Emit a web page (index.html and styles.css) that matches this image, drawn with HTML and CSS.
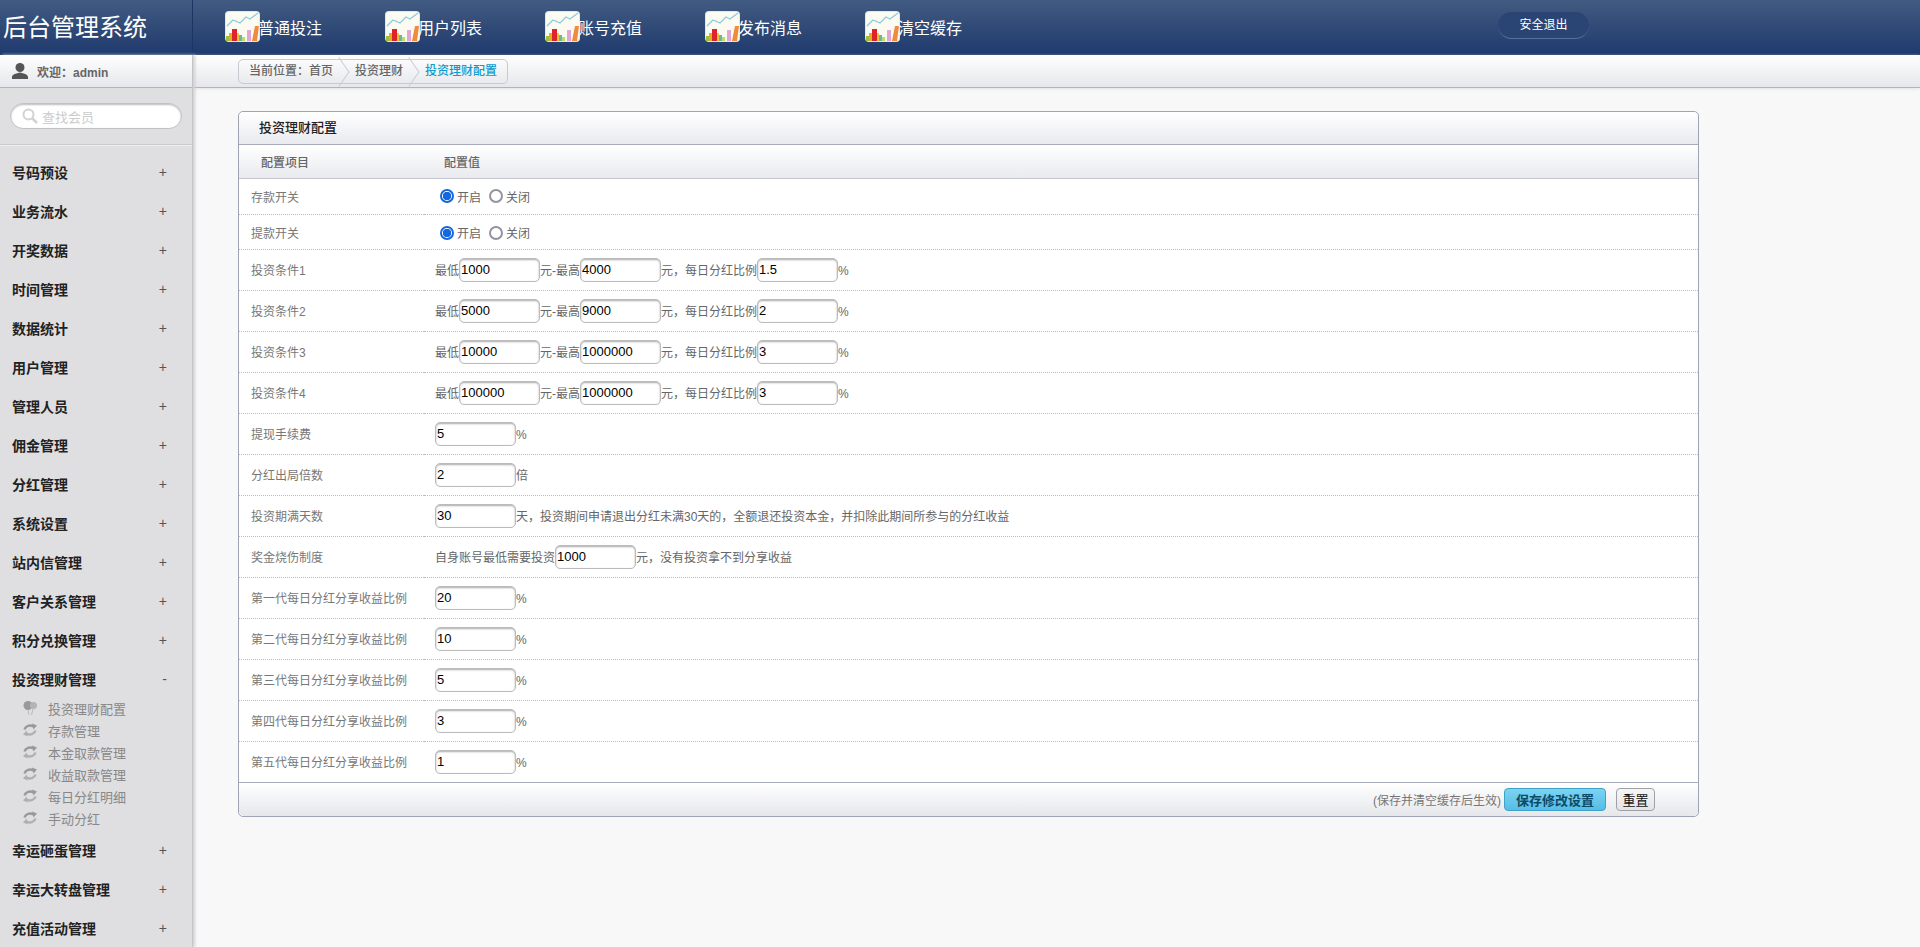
FILE: index.html
```html
<!DOCTYPE html>
<html lang="en">
<head>
    <meta charset="UTF-8">
    <meta name="viewport" content="width=device-width, initial-scale=1.0">
    <title>后台管理系统</title>
    <link rel="stylesheet" href="styles.css">
</head>
<body>
    <svg class="defs" width="0" height="0">
        <symbol id="chart" viewBox="0 0 35 31">
            <rect x="0" y="0" width="35" height="31" rx="4" fill="#e8e8e0"/>
            <rect x="1" y="1" width="33" height="29" rx="3" fill="#fbfbf2"/>
            <path d="M2 15L8 9L15 12L21 6L25 8L33 2" fill="none" stroke="#8ccbdc" stroke-width="1.200"/>
            <rect x="1" y="25" width="3" height="5" fill="#9cc23c"/>
            <rect x="4" y="22" width="3" height="8" fill="#f0a81e"/>
            <rect x="7" y="18" width="5" height="12" fill="#d8262c"/>
            <rect x="12" y="22" width="2" height="8" fill="#e8c53a"/>
            <rect x="14" y="24" width="3" height="6" fill="#63b7b0"/>
            <rect x="17" y="26" width="3" height="4" fill="#c8d860"/>
            <rect x="22" y="19" width="4" height="11" fill="#dfa6d6"/>
            <path d="M27 30L30 15H34L32 30Z" fill="#f28a3c"/>
        </symbol>
        <symbol id="refresh" viewBox="0 0 14 14">
            <path d="M1.500 6.500C2.500 3 7 1.500 10.500 3.500" fill="none" stroke="#999" stroke-width="2.500"/>
            <path d="M9 0.500L14 2.500L10.500 6.500Z" fill="#999"/>
            <path d="M12.500 7.500C11.500 11 7 12.500 3.500 10.500" fill="none" stroke="#b0b0b0" stroke-width="2.500"/>
            <path d="M5 13.500L0 11.500L3.500 7.500Z" fill="#b0b0b0"/>
        </symbol>
    </svg>

    <header class="topbar">
        <div class="logo">后台管理系统</div>
        <nav class="topnav">
            <a class="topnav-item"><svg class="chart-icon"><use href="#chart"/></svg>普通投注</a>
            <a class="topnav-item"><svg class="chart-icon"><use href="#chart"/></svg>用户列表</a>
            <a class="topnav-item"><svg class="chart-icon"><use href="#chart"/></svg>账号充值</a>
            <a class="topnav-item"><svg class="chart-icon"><use href="#chart"/></svg>发布消息</a>
            <a class="topnav-item"><svg class="chart-icon"><use href="#chart"/></svg>清空缓存</a>
        </nav>
        <a class="logout">安全退出</a>
    </header>

    <div class="layout">
        <aside class="sidebar">
            <div class="welcome">
                <svg class="user-icon" viewBox="0 0 16 16"><circle cx="8" cy="4.500" r="4.500" fill="#555"/><path d="M0 16V14C0 11 5 10.500 8 9.500C11 10.500 16 11 16 14V16Z" fill="#555"/></svg>
                <span>欢迎：admin</span>
            </div>
            <div class="search-wrap">
                <div class="search">
                    <svg class="search-icon" viewBox="0 0 16 16"><circle cx="6.500" cy="6.500" r="5" fill="none" stroke="#d2d2d2" stroke-width="2"/><path d="M10 10L15 15" stroke="#d2d2d2" stroke-width="2.500"/></svg>
                    <span>查找会员</span>
                </div>
            </div>
            <ul class="menu">
                <li class="menu-item"><span>号码预设</span><i>+</i></li>
                <li class="menu-item"><span>业务流水</span><i>+</i></li>
                <li class="menu-item"><span>开奖数据</span><i>+</i></li>
                <li class="menu-item"><span>时间管理</span><i>+</i></li>
                <li class="menu-item"><span>数据统计</span><i>+</i></li>
                <li class="menu-item"><span>用户管理</span><i>+</i></li>
                <li class="menu-item"><span>管理人员</span><i>+</i></li>
                <li class="menu-item"><span>佣金管理</span><i>+</i></li>
                <li class="menu-item"><span>分红管理</span><i>+</i></li>
                <li class="menu-item"><span>系统设置</span><i>+</i></li>
                <li class="menu-item"><span>站内信管理</span><i>+</i></li>
                <li class="menu-item"><span>客户关系管理</span><i>+</i></li>
                <li class="menu-item"><span>积分兑换管理</span><i>+</i></li>
                <li class="menu-item"><span>投资理财管理</span><i>-</i></li>
                <li class="submenu">
                    <a><svg class="sub-icon" viewBox="0 0 14 14"><circle cx="5" cy="4.500" r="4.500" fill="#999"/><circle cx="10.500" cy="4.500" r="3.500" fill="#b4b4b4"/><path d="M5 9L6 14M10 8L8.500 14" stroke="#bbb" stroke-width="1"/></svg>投资理财配置</a>
                    <a><svg class="sub-icon"><use href="#refresh"/></svg>存款管理</a>
                    <a><svg class="sub-icon"><use href="#refresh"/></svg>本金取款管理</a>
                    <a><svg class="sub-icon"><use href="#refresh"/></svg>收益取款管理</a>
                    <a><svg class="sub-icon"><use href="#refresh"/></svg>每日分红明细</a>
                    <a><svg class="sub-icon"><use href="#refresh"/></svg>手动分红</a>
                </li>
                <li class="menu-item"><span>幸运砸蛋管理</span><i>+</i></li>
                <li class="menu-item"><span>幸运大转盘管理</span><i>+</i></li>
                <li class="menu-item"><span>充值活动管理</span><i>+</i></li>
            </ul>
        </aside>

        <main class="content">
            <div class="crumbbar">
                <div class="crumbs">
                    <span class="crumb">当前位置：首页</span>
                    <span class="crumb">投资理财</span>
                    <span class="crumb current">投资理财配置</span>
                </div>
            </div>

            <form class="panel">
                <div class="panel-title">投资理财配置</div>
                <table class="config">
                    <thead>
                        <tr><th class="col-name">配置项目</th><th>配置值</th></tr>
                    </thead>
                    <tbody>
                        <tr class="switch first">
                            <td>存款开关</td>
                            <td><input class="radio" type="radio" name="dep" checked><span class="opt">开启</span><input class="radio" type="radio" name="dep"><span class="opt">关闭</span></td>
                        </tr>
                        <tr class="switch">
                            <td>提款开关</td>
                            <td><input class="radio" type="radio" name="wd" checked><span class="opt">开启</span><input class="radio" type="radio" name="wd"><span class="opt">关闭</span></td>
                        </tr>
                        <tr><td>投资条件1</td><td>最低<input class="num" value="1000">元-最高<input class="num" value="4000">元，每日分红比例<input class="num" value="1.5">%</td></tr>
                        <tr><td>投资条件2</td><td>最低<input class="num" value="5000">元-最高<input class="num" value="9000">元，每日分红比例<input class="num" value="2">%</td></tr>
                        <tr><td>投资条件3</td><td>最低<input class="num" value="10000">元-最高<input class="num" value="1000000">元，每日分红比例<input class="num" value="3">%</td></tr>
                        <tr><td>投资条件4</td><td>最低<input class="num" value="100000">元-最高<input class="num" value="1000000">元，每日分红比例<input class="num" value="3">%</td></tr>
                        <tr><td>提现手续费</td><td><input class="num" value="5">%</td></tr>
                        <tr><td>分红出局倍数</td><td><input class="num" value="2">倍</td></tr>
                        <tr><td>投资期满天数</td><td><input class="num" value="30">天，投资期间申请退出分红未满30天的，全额退还投资本金，并扣除此期间所参与的分红收益</td></tr>
                        <tr><td>奖金烧伤制度</td><td>自身账号最低需要投资<input class="num" value="1000">元，没有投资拿不到分享收益</td></tr>
                        <tr><td>第一代每日分红分享收益比例</td><td><input class="num" value="20">%</td></tr>
                        <tr><td>第二代每日分红分享收益比例</td><td><input class="num" value="10">%</td></tr>
                        <tr><td>第三代每日分红分享收益比例</td><td><input class="num" value="5">%</td></tr>
                        <tr><td>第四代每日分红分享收益比例</td><td><input class="num" value="3">%</td></tr>
                        <tr><td>第五代每日分红分享收益比例</td><td><input class="num" value="1">%</td></tr>
                    </tbody>
                </table>
                <div class="panel-foot">
                    <span class="note">(保存并清空缓存后生效)</span>
                    <button class="btn-save" type="button">保存修改设置</button>
                    <button class="btn-reset" type="button">重置</button>
                </div>
            </form>
        </main>
    </div>
</body>
</html>
```

FILE: styles.css
```css
* {
    box-sizing: border-box;
}
html, body {
    height: 100%;
}
body {
    margin: 0;
    overflow: hidden;
    display: flex;
    flex-direction: column;
    font-family: "Liberation Sans", "Noto Sans CJK SC", sans-serif;
    font-size: 12px;
    color: #666;
    background-color: #f8f8f9;
}
.defs {
    position: absolute;
}

/* top bar */
.topbar {
    flex: none;
    height: 55px;
    display: flex;
    background: linear-gradient(#425b82, #1f3a6d);
    border-bottom: 1px solid #1c3563;
    color: #fff;
}
.logo {
    width: 193px;
    padding: 13px 0 0 3px;
    font-size: 24px;
    line-height: 30px;
    white-space: nowrap;
    border-right: 1px solid #1c3563;
}
.topnav {
    display: flex;
    padding: 11px 0 0 32px;
    width: 1305px;
}
.topnav-item {
    width: 160px;
    display: flex;
    font-size: 16px;
    line-height: 35px;
}
.chart-icon {
    width: 35px;
    height: 31px;
    margin-right: -2px;
}
.logout {
    width: 91px;
    height: 27px;
    margin-top: 12px;
    border-radius: 14px;
    background-color: #2a4573;
    border-bottom: 1px solid #55709a;
    text-align: center;
    line-height: 26px;
}

/* sidebar */
.layout {
    flex: 1;
    display: flex;
    min-height: 0;
}
.sidebar {
    flex: none;
    width: 193px;
    background-color: #dfdfe1;
    border-right: 1px solid #c4c4c6;
    box-shadow: 2px 0 3px #d0d0d2;
    position: relative;
}
.welcome {
    height: 33px;
    display: flex;
    align-items: center;
    padding-left: 12px;
    font-weight: bold;
    color: #666;
    background: linear-gradient(#fff, #e6e7eb);
    border-bottom: 1px solid #b0b3c2;
}
.user-icon {
    width: 16px;
    height: 16px;
    margin-right: 9px;
}
.search-wrap {
    height: 58px;
    padding: 15px 10px 0;
    border-bottom: 1px solid #efeff0;
    box-shadow: 0 -1px 0 #c9c9cb inset;
}
.search {
    height: 26px;
    display: flex;
    align-items: center;
    padding-left: 11px;
    border: 1px solid #c2c2c4;
    border-radius: 13px;
    background-color: #fff;
    box-shadow: 0 1px 2px #bbb inset;
    color: #ccc;
    font-size: 13px;
}
.search-icon {
    width: 16px;
    height: 16px;
    margin-right: 4px;
}
.menu {
    list-style: none;
    margin: 0;
    padding: 6px 0 0;
}
.menu-item {
    height: 39px;
    display: flex;
    align-items: center;
    justify-content: space-between;
    padding: 0 25px 0 12px;
    font-size: 14px;
    font-weight: bold;
    color: #222;
}
.menu-item i {
    font-style: normal;
    font-weight: normal;
    color: #555;
}
.submenu {
    margin-top: -1px;
    padding: 0 0 1px 23px;
}
.submenu a {
    height: 22px;
    display: flex;
    align-items: center;
    font-size: 13px;
    color: #888;
}
.sub-icon {
    width: 14px;
    height: 14px;
    margin-right: 11px;
}

/* main content */
.content {
    flex: 1;
    min-width: 0;
}
.crumbbar {
    height: 33px;
    padding: 4px 0 0 45px;
    background: linear-gradient(#fff, #e6e7eb);
    border-bottom: 1px solid #b0b3c2;
    box-shadow: 0 1px 3px #e4e4e8;
}
.crumbs {
    display: inline-flex;
    height: 25px;
    border: 1px solid #c8cad2;
    border-radius: 5px;
    line-height: 23px;
    padding-left: 10px;
    padding-right: 10px;
}
.crumb {
    position: relative;
    margin-right: 22px;
    font-weight: 500;
}
.crumb::after {
    content: "";
    position: absolute;
    top: 3px;
    right: -15px;
    width: 17px;
    height: 17px;
    border-top: 1px solid #c8cad2;
    border-right: 1px solid #c8cad2;
    transform: rotate(45deg) skew(10deg, 10deg);
}
.crumb.current {
    margin-right: 0;
    color: #0d9ccf;
}
.crumb.current::after {
    display: none;
}

.panel {
    width: 1461px;
    margin: 23px 0 0 45px;
    border: 1px solid #a0a3b3;
    border-radius: 5px;
    background-color: #fff;
}
.panel-title {
    height: 33px;
    padding-left: 20px;
    line-height: 32px;
    font-size: 13px;
    font-weight: 500;
    color: #222;
    background: linear-gradient(#fff, #e9eaee);
    border-bottom: 1px solid #a8abba;
    border-radius: 5px 5px 0 0;
}
.config {
    width: 100%;
    border-collapse: collapse;
    table-layout: fixed;
}
.config th {
    height: 33px;
    padding: 0 0 0 20px;
    text-align: left;
    font-weight: 500;
    color: #666;
    background: linear-gradient(#fff, #e9eaee);
    border-bottom: 1px solid #c4c6d0;
}
.config th.col-name {
    width: 185px;
    padding-left: 22px;
}
.config td {
    height: 41px;
    padding: 0 0 0 11px;
    color: #666;
    border-bottom: 1px dotted #bbb;
    white-space: nowrap;
}
.config td:first-child {
    padding-left: 12px;
    color: #777;
}
.config tr.switch td {
    height: 35px;
    padding-top: 2px;
}
.config tr.first td {
    height: 36px;
    padding-top: 0;
}
.radio {
    appearance: none;
    width: 14px;
    height: 14px;
    margin: 0 3px 0 5px;
    border: 2px solid #9393a3;
    border-radius: 50%;
    background-color: #fff;
    vertical-align: middle;
}
.radio:checked {
    border-color: #1467dc;
    background: radial-gradient(circle, #1467dc 4px, #fff 4.500px);
}
.opt {
    margin-right: 3px;
    vertical-align: middle;
}
.num {
    width: 81px;
    height: 24px;
    padding: 0 1px;
    border: 1px solid #bbb;
    border-radius: 5px;
    box-shadow: 0 1px 2px #aaa inset;
    font-family: "Liberation Sans", sans-serif;
    font-size: 13px;
    color: #000;
}
.panel-foot {
    height: 34px;
    display: flex;
    align-items: center;
    justify-content: flex-end;
    padding: 1px 43px 0 0;
    background: linear-gradient(#fff, #e6e7eb);
    border-top: 1px solid #a8abba;
    margin-top: -1px;
    position: relative;
    border-radius: 0 0 5px 5px;
}
.note {
    color: #777;
}
.btn-save {
    width: 102px;
    height: 23px;
    margin-left: 3px;
    padding: 0;
    border: 1px solid #3fa0c8;
    border-radius: 4px;
    background: linear-gradient(#7bd4f2, #55bde6);
    font-family: inherit;
    font-size: 13px;
    font-weight: bold;
    color: #0c4a66;
}
.btn-reset {
    width: 39px;
    height: 23px;
    margin-left: 10px;
    padding: 0;
    border: 1px solid #a0a0a8;
    border-radius: 4px;
    background: linear-gradient(#f6f6f7, #e4e4e8);
    font-family: inherit;
    font-size: 13px;
    color: #111;
}
```
